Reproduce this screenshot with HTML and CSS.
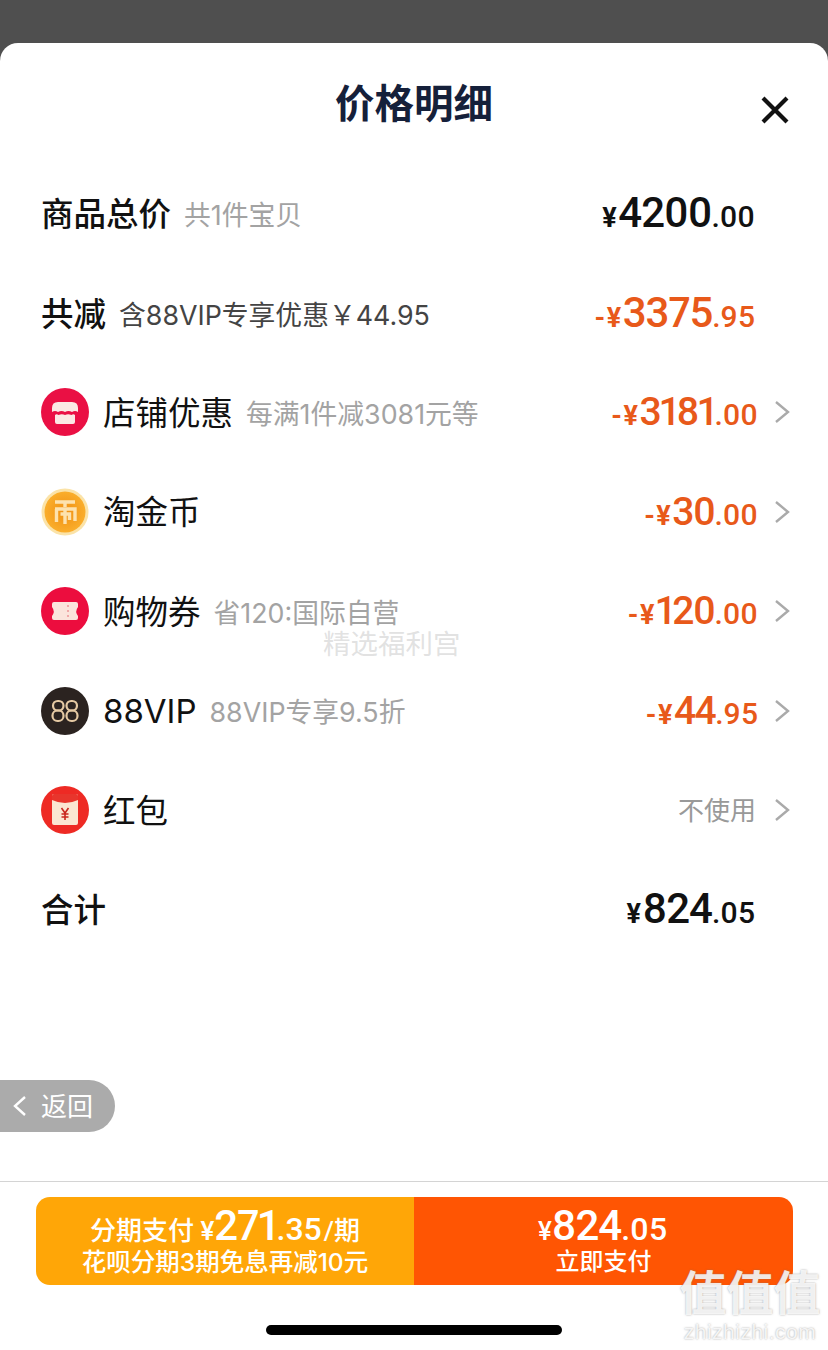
FILE: index.html
```html
<!DOCTYPE html>
<html lang="zh-CN">
<head>
  <meta charset="UTF-8">
  <title>价格明细</title>
  <link rel="stylesheet" href="styles.css">
</head>
<body>
  <div class="sheet">
    <div class="header">
      <h1>价格明细</h1>
      <svg class="close" width="30" height="30" viewBox="0 0 30 30"><path d="M3 3L27 27M27 3L3 27" stroke="#111" stroke-width="4.200" fill="none"/></svg>
    </div>

    <div class="list">
      <div class="row">
        <span class="title bold">商品总价</span>
        <span class="sub">共1件宝贝</span>
        <span class="price flush"><i>¥</i><b class="big">4200</b><em>.00</em></span>
      </div>
      <div class="row">
        <span class="title bold">共减</span>
        <span class="sub dark">含88VIP专享优惠￥44.95</span>
        <span class="price flush orange"><i>-¥</i><b class="big">3375</b><em>.95</em></span>
      </div>
      <div class="row">
        <svg class="icon" viewBox="0 0 48 48">
          <circle cx="24" cy="24" r="24" fill="#ea1044"/>
          <path d="M17 14H31Q37 14 37 20V24Q34 22 31 24Q27.500 22 24 24Q20.500 22 17 24Q14 22 11 24V20Q11 14 17 14Z" fill="#fbe9e4"/>
          <path d="M14 27Q15.500 25.500 17.500 27Q21 25.500 24 27Q27 25.500 30.500 27Q32.500 25.500 34 27V34Q34 36 32 36H16Q14 36 14 34Z" fill="#fbe9e4"/>
        </svg>
        <span class="title">店铺优惠</span>
        <span class="sub">每满1件减3081元等</span>
        <span class="price orange"><i>-¥</i><b>3181</b><em>.00</em></span>
        <svg class="arrow" width="16" height="24" viewBox="0 0 16 24"><path d="M2 2L14 12L2 22" stroke="#aaa" stroke-width="2.400" fill="none"/></svg>
      </div>
      <div class="row">
        <svg class="icon" viewBox="0 0 48 48">
          <defs>
            <radialGradient id="coin" cx="50%" cy="50%" r="55%">
              <stop offset="0" stop-color="#f08f12"/>
              <stop offset="1" stop-color="#fbb12e"/>
            </radialGradient>
          </defs>
          <circle cx="24" cy="24" r="23.500" fill="#fbe3a8"/>
          <circle cx="24" cy="24" r="20.500" fill="url(#coin)"/>
          <path d="M14 14H34M24 13V19M14 21H34V33M15.500 21V34M24 21V36M19.500 26H28.500V32" stroke="#fde2ae" stroke-width="3.400" fill="none"/>
        </svg>
        <span class="title">淘金币</span>
        <span class="price orange"><i>-¥</i><b>30</b><em>.00</em></span>
        <svg class="arrow" width="16" height="24" viewBox="0 0 16 24"><path d="M2 2L14 12L2 22" stroke="#aaa" stroke-width="2.400" fill="none"/></svg>
      </div>
      <div class="row">
        <svg class="icon" viewBox="0 0 48 48">
          <circle cx="24" cy="24" r="24" fill="#ec0d3e"/>
          <path d="M13 15H35Q37 15 37 17V20Q33.500 24.500 37 29V31Q37 33 35 33H13Q11 33 11 31V29Q14.500 24.500 11 20V17Q11 15 13 15Z" fill="#fbe4dc"/>
          <path d="M27 18V20M27 23V25M27 28V30" stroke="#f0a8a8" stroke-width="2"/>
        </svg>
        <span class="title">购物券</span>
        <span class="sub">省120:国际自营</span>
        <span class="price orange"><i>-¥</i><b>120</b><em>.00</em></span>
        <svg class="arrow" width="16" height="24" viewBox="0 0 16 24"><path d="M2 2L14 12L2 22" stroke="#aaa" stroke-width="2.400" fill="none"/></svg>
      </div>
      <div class="row">
        <svg class="icon" viewBox="0 0 48 48">
          <circle cx="24" cy="24" r="24" fill="#2b2320"/>
          <g fill="none" stroke="#e5c9a3" stroke-width="2.200">
            <rect x="12" y="14" width="10.500" height="9.500" rx="4.700"/>
            <rect x="11.500" y="23.500" width="11" height="10.500" rx="5"/>
            <rect x="25.500" y="14" width="10.500" height="9.500" rx="4.700"/>
            <rect x="25.500" y="23.500" width="11" height="10.500" rx="5"/>
          </g>
        </svg>
        <span class="title latin">88VIP</span>
        <span class="sub">88VIP专享9.5折</span>
        <span class="price orange"><i>-¥</i><b>44</b><em>.95</em></span>
        <svg class="arrow" width="16" height="24" viewBox="0 0 16 24"><path d="M2 2L14 12L2 22" stroke="#aaa" stroke-width="2.400" fill="none"/></svg>
      </div>
      <div class="row">
        <svg class="icon" viewBox="0 0 48 48">
          <circle cx="24" cy="24" r="24" fill="#ee2a24"/>
          <rect x="11" y="8" width="26" height="31" rx="2" fill="#fbe6d2"/>
          <path d="M11 10Q11 8 13 8H35Q37 8 37 10V14Q24 20 11 14Z" fill="#e8352c"/>
          <path d="M20.500 22L24 27L27.500 22M24 27V34M20.500 28H27.500M20.500 31H27.500" stroke="#c9271f" stroke-width="1.600" fill="none"/>
        </svg>
        <span class="title">红包</span>
        <span class="none">不使用</span>
        <svg class="arrow" width="16" height="24" viewBox="0 0 16 24"><path d="M2 2L14 12L2 22" stroke="#aaa" stroke-width="2.400" fill="none"/></svg>
      </div>
      <div class="row">
        <span class="title bold">合计</span>
        <span class="price flush"><i>¥</i><b class="big">824</b><em>.05</em></span>
      </div>
    </div>

    <div class="footer">
      <div class="pay">
        <div class="pay-left">
          <div class="pay-top">分期支付 ¥<b>271</b><em>.35</em>/期</div>
          <div class="pay-note">花呗分期3期免息再减10元</div>
        </div>
        <div class="pay-right">
          <div class="pay-top">¥<b>824</b><em>.05</em></div>
          <div class="pay-note short">立即支付</div>
        </div>
      </div>
      <div class="home-bar"></div>
    </div>
  </div>

  <div class="back">
    <svg width="14" height="22" viewBox="0 0 14 22"><path d="M12 2L2 11L12 20" stroke="#fff" stroke-width="2.400" fill="none"/></svg>
    <span>返回</span>
  </div>

  <div class="mark-center">精选福利宫</div>
  <div class="mark-corner">
    <div class="mark-big">值值值</div>
    <div class="mark-url">zhizhizhi.com</div>
  </div>
</body>
</html>
```

FILE: styles.css
```css
* {
  box-sizing: border-box;
}
html, body {
  margin: 0;
  padding: 0;
  height: 1350px;
  overflow: hidden;
  background: #4f4f4f;
  font-family: Inter, "Noto Sans CJK SC", sans-serif;
}

.sheet {
  margin-top: 43px;
  height: 1307px;
  background: #fff;
  border-radius: 18px 18px 0 0;
  display: flex;
  flex-direction: column;
}

.header {
  height: 121px;
  display: flex;
  justify-content: center;
  padding-top: 34px;
  position: relative;
}
.header h1 {
  margin: 0;
  font-size: 39.500px;
  line-height: 54px;
  font-weight: 700;
  color: #15203a;
}
.close {
  position: absolute;
  right: 38px;
  top: 52px;
}

.list {
  flex: 1;
  padding: 0 38px 0 41px;
}
.row {
  height: 99.400px;
  display: flex;
  align-items: center;
}
.icon {
  width: 48px;
  height: 48px;
  margin-right: 14px;
  flex: none;
}
.title {
  font-size: 32.500px;
  color: #111;
  margin-right: 13px;
  margin-bottom: 4px;
}
.title.bold {
  font-weight: 500;
}
.title.latin {
  font-size: 33px;
  margin-bottom: 0;
}
.sub {
  font-size: 26.800px;
  color: #a3a3a3;
}
.sub.dark {
  color: #444;
}
.none {
  margin-left: auto;
  margin-right: 2px;
  margin-bottom: 4px;
  font-size: 26px;
  color: #999;
}

.price {
  margin-left: auto;
  color: #111;
  font-family: Roboto, sans-serif;
  font-size: 30px;
  font-variant-numeric: proportional-nums;
  white-space: nowrap;
}
.price.flush {
  margin-right: 35px;
  margin-bottom: 2px;
}
.price.orange {
  color: #e8591a;
}
.price i {
  font-style: normal;
  font-weight: 700;
  font-size: 27px;
  letter-spacing: 1.500px;
}
.price b {
  font-size: 39px;
  font-weight: 500;
  letter-spacing: -1.500px;
}
.price b.big {
  font-size: 42px;
  letter-spacing: -1px;
}
.price em {
  font-style: normal;
  font-weight: 500;
  font-size: 30px;
}
.arrow {
  margin-left: 16px;
  flex: none;
}

.footer {
  border-top: 1px solid #d4d4d4;
  height: 169px;
  padding: 15px 35px 0 36px;
  display: flex;
  flex-direction: column;
}
.pay {
  width: 100%;
  height: 88px;
  display: flex;
  border-radius: 14px;
  overflow: hidden;
  color: #fff;
}
.pay-left {
  flex: 378;
  background: #ffa607;
}
.pay-right {
  flex: 379;
  background: #ff5503;
}
.pay-left, .pay-right {
  display: flex;
  flex-direction: column;
  align-items: center;
  justify-content: center;
}
.pay-top {
  font-size: 26px;
  line-height: 44px;
  font-weight: 500;
  font-family: Roboto, "Noto Sans CJK SC", sans-serif;
  font-variant-numeric: proportional-nums;
  height: 44px;
}
.pay-top b {
  font-size: 42px;
  font-weight: 500;
  letter-spacing: -1px;
}
.pay-top em {
  font-style: normal;
  font-size: 32px;
  margin-right: 2px;
}
.pay-note {
  font-size: 24.500px;
  line-height: 28px;
  font-weight: 500;
  margin-bottom: 3px;
}
.pay-note.short {
  font-size: 24px;
}
.home-bar {
  width: 296px;
  height: 10px;
  border-radius: 5px;
  background: #000;
  margin: 40px 0 0 230px;
}

.back {
  position: absolute;
  left: 0;
  top: 1080px;
  width: 115px;
  height: 52px;
  background: #ababab;
  border-radius: 0 26px 26px 0;
  display: flex;
  align-items: center;
  padding-left: 13px;
  gap: 14px;
  color: #fff;
  font-size: 26px;
}
.back span {
  margin-bottom: 3px;
}

.mark-center {
  position: absolute;
  left: 323px;
  top: 625px;
  font-size: 27.500px;
  line-height: 38px;
  color: rgba(190, 190, 190, 0.45);
}
.mark-corner {
  position: absolute;
  left: 677px;
  top: 1266px;
  width: 146px;
  text-align: center;
  color: rgba(255, 255, 255, 0.85);
  text-shadow: 0 0 2px rgba(120, 120, 120, 0.7);
}
.mark-big {
  font-size: 47px;
  line-height: 54px;
  font-weight: 700;
}
.mark-url {
  font-family: "Liberation Sans", sans-serif;
  font-size: 21px;
  line-height: 24px;
  letter-spacing: 0.500px;
}
```
